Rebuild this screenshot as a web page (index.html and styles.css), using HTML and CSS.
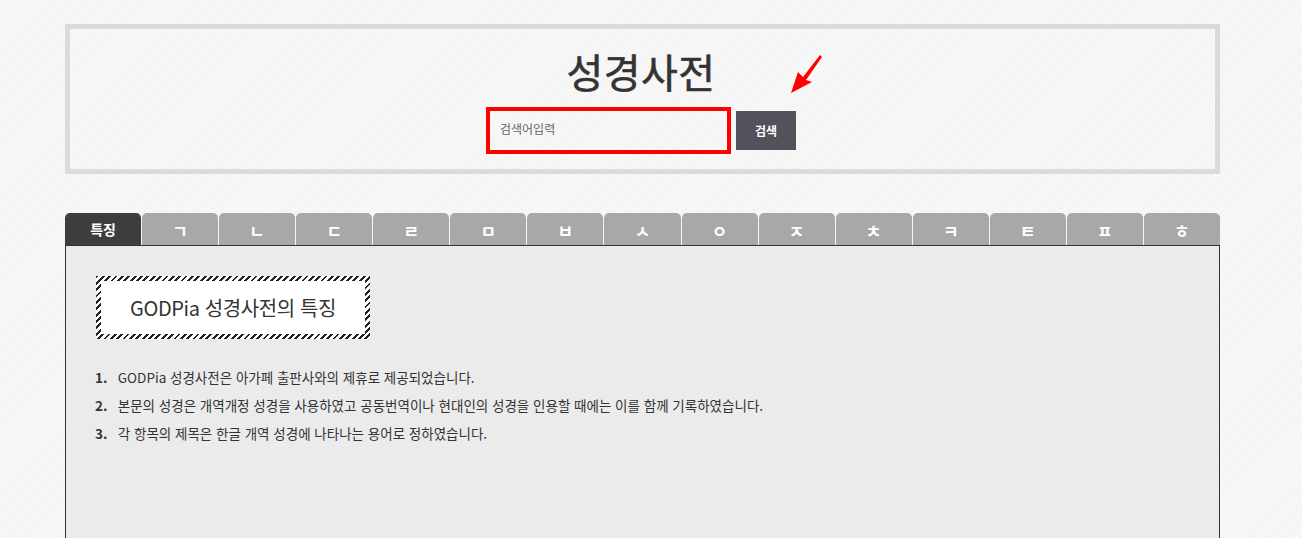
FILE: index.html
```html
<!DOCTYPE html>
<html lang="ko">
<head>
    <meta charset="UTF-8">
    <meta name="viewport" content="width=device-width, initial-scale=1.0">
    <title>성경사전 - GODPia</title>
    <link rel="stylesheet" href="styles.css">
</head>

<body>
    <div class="wrap">
        <div class="header">
            <h1>성경사전</h1>
            <form class="search">
                <input type="text" class="search-input" placeholder="검색어입력">
                <button type="submit" class="search-btn">검색</button>
            </form>
            <svg class="arrow" width="40" height="48" viewBox="0 0 40 48">
                <polygon points="5,43 12,22 17,27 34,5 36,7 20,30 26,32" fill="#ff0000"/>
            </svg>
        </div>

        <ul class="tabs">
            <li class="tab active">특징</li>
            <li class="tab">ㄱ</li>
            <li class="tab">ㄴ</li>
            <li class="tab">ㄷ</li>
            <li class="tab">ㄹ</li>
            <li class="tab">ㅁ</li>
            <li class="tab">ㅂ</li>
            <li class="tab">ㅅ</li>
            <li class="tab">ㅇ</li>
            <li class="tab">ㅈ</li>
            <li class="tab">ㅊ</li>
            <li class="tab">ㅋ</li>
            <li class="tab">ㅌ</li>
            <li class="tab">ㅍ</li>
            <li class="tab">ㅎ</li>
        </ul>

        <div class="panel">
            <div class="feature-title">
                <h2>GODPia 성경사전의 특징</h2>
            </div>
            <ol class="feature-list">
                <li><b>1.</b> GODPia 성경사전은 아가페 출판사와의 제휴로 제공되었습니다.</li>
                <li><b>2.</b> 본문의 성경은 개역개정 성경을 사용하였고 공동번역이나 현대인의 성경을 인용할 때에는 이를 함께 기록하였습니다.</li>
                <li><b>3.</b> 각 항목의 제목은 한글 개역 성경에 나타나는 용어로 정하였습니다.</li>
            </ol>
        </div>
    </div>
</body>
</html>
```

FILE: styles.css
```css
body {
    margin: 0;
    font-family: "Noto Sans CJK KR", "Noto Sans", sans-serif;
    color: #333;
    background-color: #f7f7f7;
    background-image: repeating-linear-gradient(135deg, #f8f8f8 0, #f8f8f8 2px, #f2f2f2 2px, #f2f2f2 3px);
    height: 538px;
    overflow: hidden;
}

.wrap {
    width: 1155px;
    margin-left: 65px;
    padding-top: 24px;
}

.header {
    position: relative;
    height: 140px;
    border: 5px solid #dadada;
    text-align: center;
}

.header h1 {
    margin: 16px 0 0 -3px;
    font-size: 40px;
    font-weight: normal;
    line-height: 52px;
    letter-spacing: 0.5px;
    color: #333;
    -webkit-text-stroke: 0.6px #333;
}

.search {
    display: flex;
    justify-content: center;
    align-items: center;
    gap: 5px;
    margin-top: 10px;
    margin-left: -3px;
}

.search-input {
    box-sizing: border-box;
    width: 245px;
    height: 47px;
    border: 4px solid #ff0000;
    background: transparent;
    padding: 0 10px 4px;
    font-family: inherit;
    font-size: 12px;
    color: #333;
    outline: none;
}

.search-input::placeholder {
    color: #666;
}

.search-btn {
    width: 60px;
    height: 39px;
    border: none;
    background: #53515a;
    color: white;
    font-family: inherit;
    font-size: 12px;
    font-weight: bold;
    cursor: pointer;
}

/* red pointer drawn over the header */
.arrow {
    position: absolute;
    left: 716px;
    top: 21px;
}

.tabs {
    display: flex;
    gap: 1px;
    list-style: none;
    margin: 39px 0 0;
    padding: 0;
}

.tab {
    flex: 1;
    height: 32px;
    line-height: 36px;
    text-align: center;
    background: #a8a8a8;
    color: white;
    font-size: 17px;
    font-weight: bold;
    border-radius: 5px 5px 0 0;
}

.tab.active {
    background: #3d3d3d;
    font-size: 14px;
    line-height: 33px;
}

.panel {
    border: 1px solid #333;
    background: #ebebeb;
    height: 400px;
    padding: 30px 0 0 30px;
}

.feature-title {
    display: inline-block;
    padding: 5px;
    background: repeating-linear-gradient(135deg, #222 0, #222 2px, white 2px, white 4.5px);
}

.feature-title h2 {
    margin: 0;
    width: 264px;
    height: 53px;
    line-height: 53px;
    background: white;
    text-align: center;
    font-size: 20px;
    font-weight: normal;
    letter-spacing: -0.4px;
    color: #333;
}

.feature-list {
    list-style: none;
    margin: 24px 0 0 -1px;
    padding: 0;
    font-size: 13.5px;
    line-height: 28px;
    color: #333;
}

.feature-list b {
    display: inline-block;
    width: 19px;
}
```
